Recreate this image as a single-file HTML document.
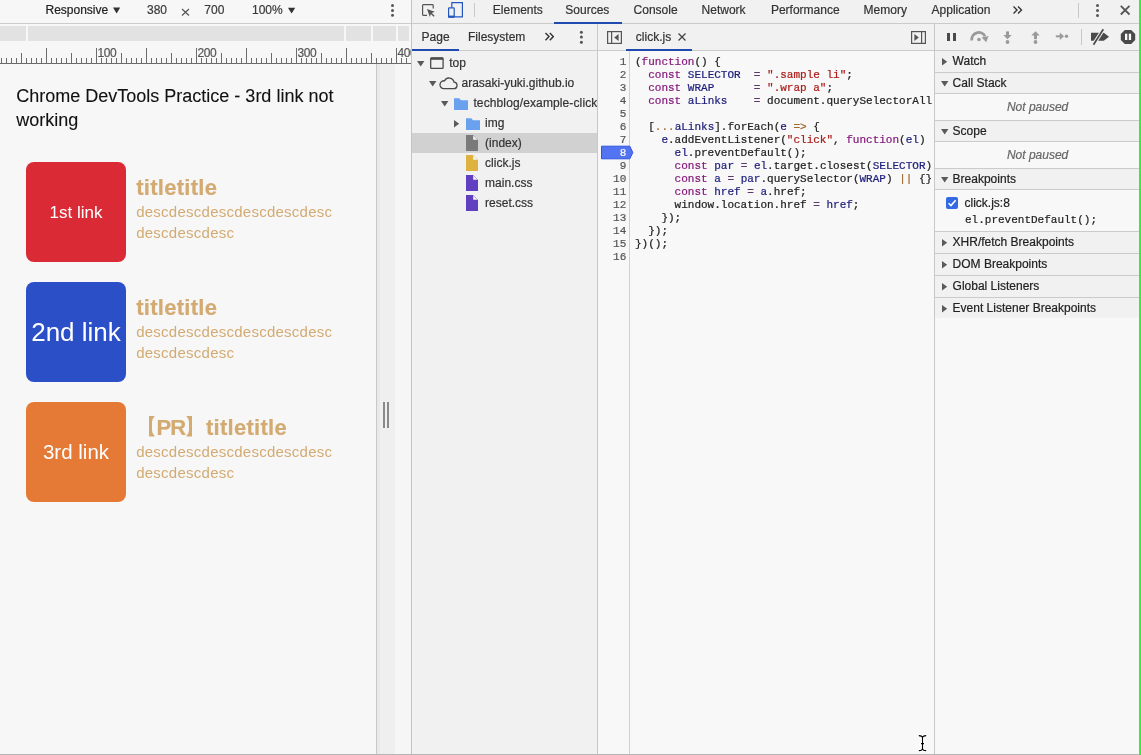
<!DOCTYPE html>
<html><head><meta charset="utf-8"><style>
html,body{margin:0;padding:0;}
body{width:1141px;height:755px;position:relative;overflow:hidden;background:#f7f7f7;font-family:"Liberation Sans", sans-serif;}
div{-webkit-text-stroke:0.2px currentColor;}
</style></head><body><div style="position:absolute;left:0;top:0;width:1141px;height:755px;will-change:transform">
<div style="position:absolute;left:0px;top:0px;width:411px;height:755px;background:#f7f7f7;"></div>
<div style="position:absolute;left:0px;top:0px;width:411px;height:23px;background:#f7f7f7;"></div>
<div style="position:absolute;left:0px;top:23px;width:411px;height:1px;background:#cbcbcb;"></div>
<div style="position:absolute;left:45.5px;top:-5px;line-height:30px;font-size:12px;color:#222;font-weight:normal;font-style:normal;font-family:'Liberation Sans', sans-serif;white-space:pre;">Responsive</div>
<svg style="position:absolute;left:113px;top:7px" width="8" height="7" viewBox="0 0 8 7"><path d="M0 0.5 H7.2 L3.6 6.6 Z" fill="#333"/></svg>
<div style="position:absolute;left:147px;top:-5px;line-height:30px;font-size:12px;color:#3a3a3a;font-weight:normal;font-style:normal;font-family:'Liberation Sans', sans-serif;white-space:pre;">380</div>
<svg style="position:absolute;left:181px;top:8px" width="9" height="8" viewBox="0 0 9 8"><path d="M1 1 L8 7.5 M8 1 L1 7.5" stroke="#555" stroke-width="1.2"/></svg>
<div style="position:absolute;left:204.3px;top:-5px;line-height:30px;font-size:12px;color:#3a3a3a;font-weight:normal;font-style:normal;font-family:'Liberation Sans', sans-serif;white-space:pre;">700</div>
<div style="position:absolute;left:252px;top:-5px;line-height:30px;font-size:12px;color:#3a3a3a;font-weight:normal;font-style:normal;font-family:'Liberation Sans', sans-serif;white-space:pre;">100%</div>
<svg style="position:absolute;left:288px;top:7px" width="8" height="7" viewBox="0 0 8 7"><path d="M0 0.7 H7.2 L3.6 6.6 Z" fill="#333"/></svg>
<svg style="position:absolute;left:390px;top:3px" width="5" height="15" viewBox="0 0 5 15"><circle cx="2.5" cy="2.5" r="1.5" fill="#555"/><circle cx="2.5" cy="7.4" r="1.5" fill="#555"/><circle cx="2.5" cy="12.3" r="1.5" fill="#555"/></svg>
<div style="position:absolute;left:0px;top:26px;width:409px;height:15px;background:#e2e2e2;"></div>
<div style="position:absolute;left:26px;top:26px;width:2px;height:15px;background:#f7f7f7;"></div>
<div style="position:absolute;left:344px;top:26px;width:2px;height:15px;background:#f7f7f7;"></div>
<div style="position:absolute;left:371px;top:26px;width:2px;height:15px;background:#f7f7f7;"></div>
<div style="position:absolute;left:396px;top:26px;width:2px;height:15px;background:#f7f7f7;"></div>
<svg style="position:absolute;left:0px;top:0px" width="411" height="64" viewBox="0 0 411 64"><rect x="1" y="58" width="1" height="5" fill="#6b6b6b"/><rect x="6" y="58" width="1" height="5" fill="#6b6b6b"/><rect x="11" y="58" width="1" height="5" fill="#6b6b6b"/><rect x="16" y="58" width="1" height="5" fill="#6b6b6b"/><rect x="21" y="53" width="1" height="10" fill="#6b6b6b"/><rect x="26" y="58" width="1" height="5" fill="#6b6b6b"/><rect x="31" y="58" width="1" height="5" fill="#6b6b6b"/><rect x="36" y="58" width="1" height="5" fill="#6b6b6b"/><rect x="41" y="58" width="1" height="5" fill="#6b6b6b"/><rect x="46" y="48" width="1" height="15" fill="#6b6b6b"/><rect x="51" y="58" width="1" height="5" fill="#6b6b6b"/><rect x="56" y="58" width="1" height="5" fill="#6b6b6b"/><rect x="61" y="58" width="1" height="5" fill="#6b6b6b"/><rect x="66" y="58" width="1" height="5" fill="#6b6b6b"/><rect x="71" y="53" width="1" height="10" fill="#6b6b6b"/><rect x="76" y="58" width="1" height="5" fill="#6b6b6b"/><rect x="81" y="58" width="1" height="5" fill="#6b6b6b"/><rect x="86" y="58" width="1" height="5" fill="#6b6b6b"/><rect x="91" y="58" width="1" height="5" fill="#6b6b6b"/><rect x="96" y="48" width="1" height="15" fill="#6b6b6b"/><rect x="101" y="58" width="1" height="5" fill="#6b6b6b"/><rect x="106" y="58" width="1" height="5" fill="#6b6b6b"/><rect x="111" y="58" width="1" height="5" fill="#6b6b6b"/><rect x="116" y="58" width="1" height="5" fill="#6b6b6b"/><rect x="121" y="53" width="1" height="10" fill="#6b6b6b"/><rect x="126" y="58" width="1" height="5" fill="#6b6b6b"/><rect x="131" y="58" width="1" height="5" fill="#6b6b6b"/><rect x="136" y="58" width="1" height="5" fill="#6b6b6b"/><rect x="141" y="58" width="1" height="5" fill="#6b6b6b"/><rect x="146" y="48" width="1" height="15" fill="#6b6b6b"/><rect x="151" y="58" width="1" height="5" fill="#6b6b6b"/><rect x="156" y="58" width="1" height="5" fill="#6b6b6b"/><rect x="161" y="58" width="1" height="5" fill="#6b6b6b"/><rect x="166" y="58" width="1" height="5" fill="#6b6b6b"/><rect x="171" y="53" width="1" height="10" fill="#6b6b6b"/><rect x="176" y="58" width="1" height="5" fill="#6b6b6b"/><rect x="181" y="58" width="1" height="5" fill="#6b6b6b"/><rect x="186" y="58" width="1" height="5" fill="#6b6b6b"/><rect x="191" y="58" width="1" height="5" fill="#6b6b6b"/><rect x="196" y="48" width="1" height="15" fill="#6b6b6b"/><rect x="201" y="58" width="1" height="5" fill="#6b6b6b"/><rect x="206" y="58" width="1" height="5" fill="#6b6b6b"/><rect x="211" y="58" width="1" height="5" fill="#6b6b6b"/><rect x="216" y="58" width="1" height="5" fill="#6b6b6b"/><rect x="221" y="53" width="1" height="10" fill="#6b6b6b"/><rect x="226" y="58" width="1" height="5" fill="#6b6b6b"/><rect x="231" y="58" width="1" height="5" fill="#6b6b6b"/><rect x="236" y="58" width="1" height="5" fill="#6b6b6b"/><rect x="241" y="58" width="1" height="5" fill="#6b6b6b"/><rect x="246" y="48" width="1" height="15" fill="#6b6b6b"/><rect x="251" y="58" width="1" height="5" fill="#6b6b6b"/><rect x="256" y="58" width="1" height="5" fill="#6b6b6b"/><rect x="261" y="58" width="1" height="5" fill="#6b6b6b"/><rect x="266" y="58" width="1" height="5" fill="#6b6b6b"/><rect x="271" y="53" width="1" height="10" fill="#6b6b6b"/><rect x="276" y="58" width="1" height="5" fill="#6b6b6b"/><rect x="281" y="58" width="1" height="5" fill="#6b6b6b"/><rect x="286" y="58" width="1" height="5" fill="#6b6b6b"/><rect x="291" y="58" width="1" height="5" fill="#6b6b6b"/><rect x="296" y="48" width="1" height="15" fill="#6b6b6b"/><rect x="301" y="58" width="1" height="5" fill="#6b6b6b"/><rect x="306" y="58" width="1" height="5" fill="#6b6b6b"/><rect x="311" y="58" width="1" height="5" fill="#6b6b6b"/><rect x="316" y="58" width="1" height="5" fill="#6b6b6b"/><rect x="321" y="53" width="1" height="10" fill="#6b6b6b"/><rect x="326" y="58" width="1" height="5" fill="#6b6b6b"/><rect x="331" y="58" width="1" height="5" fill="#6b6b6b"/><rect x="336" y="58" width="1" height="5" fill="#6b6b6b"/><rect x="341" y="58" width="1" height="5" fill="#6b6b6b"/><rect x="346" y="48" width="1" height="15" fill="#6b6b6b"/><rect x="351" y="58" width="1" height="5" fill="#6b6b6b"/><rect x="356" y="58" width="1" height="5" fill="#6b6b6b"/><rect x="361" y="58" width="1" height="5" fill="#6b6b6b"/><rect x="366" y="58" width="1" height="5" fill="#6b6b6b"/><rect x="371" y="53" width="1" height="10" fill="#6b6b6b"/><rect x="376" y="58" width="1" height="5" fill="#6b6b6b"/><rect x="381" y="58" width="1" height="5" fill="#6b6b6b"/><rect x="386" y="58" width="1" height="5" fill="#6b6b6b"/><rect x="391" y="58" width="1" height="5" fill="#6b6b6b"/><rect x="396" y="48" width="1" height="15" fill="#6b6b6b"/><rect x="401" y="58" width="1" height="5" fill="#6b6b6b"/><rect x="406" y="58" width="1" height="5" fill="#6b6b6b"/><rect x="411" y="58" width="1" height="5" fill="#6b6b6b"/><rect x="0" y="63" width="411" height="1" fill="#6b6b6b"/></svg>
<div style="position:absolute;left:97.5px;top:38px;line-height:30px;font-size:12px;color:#555;font-weight:normal;font-style:normal;font-family:'Liberation Sans', sans-serif;white-space:pre;letter-spacing:-0.45px;">100</div>
<div style="position:absolute;left:197.5px;top:38px;line-height:30px;font-size:12px;color:#555;font-weight:normal;font-style:normal;font-family:'Liberation Sans', sans-serif;white-space:pre;letter-spacing:-0.45px;">200</div>
<div style="position:absolute;left:297.5px;top:38px;line-height:30px;font-size:12px;color:#555;font-weight:normal;font-style:normal;font-family:'Liberation Sans', sans-serif;white-space:pre;letter-spacing:-0.45px;">300</div>
<div style="position:absolute;left:397.5px;top:38px;line-height:30px;font-size:12px;color:#555;font-weight:normal;font-style:normal;font-family:'Liberation Sans', sans-serif;white-space:pre;letter-spacing:-0.45px;">400</div>
<div style="position:absolute;left:16.3px;top:81px;line-height:30px;font-size:18px;color:#111;font-weight:normal;font-style:normal;font-family:'Liberation Sans', sans-serif;white-space:pre;-webkit-text-stroke:0.1px currentColor;">Chrome DevTools Practice - 3rd link not</div>
<div style="position:absolute;left:16.3px;top:105px;line-height:30px;font-size:18px;color:#111;font-weight:normal;font-style:normal;font-family:'Liberation Sans', sans-serif;white-space:pre;-webkit-text-stroke:0.1px currentColor;">working</div>
<div style="position:absolute;left:26px;top:162px;width:100px;height:100px;background:#d92a35;border-radius:8px;"></div>
<div style="position:absolute;left:26px;top:198px;line-height:30px;font-size:17px;color:#fff;font-weight:normal;font-style:normal;font-family:'Liberation Sans', sans-serif;white-space:pre;width:100px;text-align:center;-webkit-text-stroke:0;">1st link</div>
<div style="position:absolute;left:26px;top:282px;width:100px;height:100px;background:#2b4fc6;border-radius:8px;"></div>
<div style="position:absolute;left:26px;top:317px;line-height:30px;font-size:26px;color:#fff;font-weight:normal;font-style:normal;font-family:'Liberation Sans', sans-serif;white-space:pre;width:100px;text-align:center;-webkit-text-stroke:0;">2nd link</div>
<div style="position:absolute;left:26px;top:402px;width:100px;height:100px;background:#e47a36;border-radius:8px;"></div>
<div style="position:absolute;left:26px;top:437px;line-height:30px;font-size:20.5px;color:#fff;font-weight:normal;font-style:normal;font-family:'Liberation Sans', sans-serif;white-space:pre;width:100px;text-align:center;-webkit-text-stroke:0;">3rd link</div>
<div style="position:absolute;left:136.2px;top:173px;line-height:30px;font-size:22px;color:#d3ab72;font-weight:bold;font-style:normal;font-family:'Liberation Sans', sans-serif;white-space:pre;letter-spacing:0.28px;">titletitle</div>
<div style="position:absolute;left:136.2px;top:197px;line-height:30px;font-size:15px;color:#d3ab72;font-weight:normal;font-style:normal;font-family:'Liberation Sans', sans-serif;white-space:pre;letter-spacing:0.25px;-webkit-text-stroke:0;">descdescdescdescdescdesc</div>
<div style="position:absolute;left:136.2px;top:218px;line-height:30px;font-size:15px;color:#d3ab72;font-weight:normal;font-style:normal;font-family:'Liberation Sans', sans-serif;white-space:pre;letter-spacing:0.25px;-webkit-text-stroke:0;">descdescdesc</div>
<div style="position:absolute;left:136.2px;top:293px;line-height:30px;font-size:22px;color:#d3ab72;font-weight:bold;font-style:normal;font-family:'Liberation Sans', sans-serif;white-space:pre;letter-spacing:0.28px;">titletitle</div>
<div style="position:absolute;left:136.2px;top:317px;line-height:30px;font-size:15px;color:#d3ab72;font-weight:normal;font-style:normal;font-family:'Liberation Sans', sans-serif;white-space:pre;letter-spacing:0.25px;-webkit-text-stroke:0;">descdescdescdescdescdesc</div>
<div style="position:absolute;left:136.2px;top:338px;line-height:30px;font-size:15px;color:#d3ab72;font-weight:normal;font-style:normal;font-family:'Liberation Sans', sans-serif;white-space:pre;letter-spacing:0.25px;-webkit-text-stroke:0;">descdescdesc</div>
<svg style="position:absolute;left:148px;top:416px" width="7" height="21" viewBox="0 0 7 21"><path d="M1 0 H6.5 L6.5 0.6 Q4 3 4 6 V14.5 Q4 17.5 6.5 19.8 V20.5 H1 Z" fill="#d3ab72"/></svg>
<div style="position:absolute;left:156.6px;top:413px;line-height:30px;font-size:22px;color:#d3ab72;font-weight:bold;font-style:normal;font-family:'Liberation Sans', sans-serif;white-space:pre;letter-spacing:-1.1px;">PR</div>
<svg style="position:absolute;left:186px;top:416px" width="7" height="21" viewBox="0 0 7 21"><path d="M6 0 H0.5 L0.5 0.6 Q3 3 3 6 V14.5 Q3 17.5 0.5 19.8 V20.5 H6 Z" fill="#d3ab72"/></svg>
<div style="position:absolute;left:206px;top:413px;line-height:30px;font-size:22px;color:#d3ab72;font-weight:bold;font-style:normal;font-family:'Liberation Sans', sans-serif;white-space:pre;letter-spacing:0.28px;">titletitle</div>
<div style="position:absolute;left:136.2px;top:437px;line-height:30px;font-size:15px;color:#d3ab72;font-weight:normal;font-style:normal;font-family:'Liberation Sans', sans-serif;white-space:pre;letter-spacing:0.25px;-webkit-text-stroke:0;">descdescdescdescdescdesc</div>
<div style="position:absolute;left:136.2px;top:458px;line-height:30px;font-size:15px;color:#d3ab72;font-weight:normal;font-style:normal;font-family:'Liberation Sans', sans-serif;white-space:pre;letter-spacing:0.25px;-webkit-text-stroke:0;">descdescdesc</div>
<div style="position:absolute;left:376px;top:64px;width:1px;height:691px;background:#c8c8c8;"></div>
<div style="position:absolute;left:377px;top:64px;width:3px;height:691px;background:#e9e9e9;"></div>
<div style="position:absolute;left:380px;top:64px;width:15px;height:691px;background:#efefef;"></div>
<div style="position:absolute;left:395px;top:64px;width:16px;height:691px;background:#f6f6f6;"></div>
<div style="position:absolute;left:383px;top:402px;width:2px;height:26px;background:#8a8a8a;"></div>
<div style="position:absolute;left:387px;top:402px;width:2px;height:26px;background:#8a8a8a;"></div>
<div style="position:absolute;left:411px;top:0px;width:1px;height:755px;background:#c4c4c4;"></div>
<div style="position:absolute;left:412px;top:0px;width:727px;height:755px;background:#f1f1f1;"></div>
<div style="position:absolute;left:412px;top:23px;width:727px;height:1px;background:#cbcbcb;"></div>
<svg style="position:absolute;left:420px;top:2px" width="18" height="18" viewBox="0 0 18 18"><path d="M7 13.3 H3.4 Q2.6 13.3 2.6 12.5 V3.4 Q2.6 2.6 3.4 2.6 H12.4 Q13.2 2.6 13.2 3.4 V6.6" fill="none" stroke="#555" stroke-width="1.2"/><path d="M7 7 L14.8 9.8 L11.8 11 L14.6 13.8 L13.6 14.8 L10.8 12 L9.8 15 Z" fill="#555"/></svg>
<svg style="position:absolute;left:446px;top:1px" width="18" height="18" viewBox="0 0 18 18"><path d="M5.8 6.4 V1.6 H16.4 V15.9 H8.6" fill="none" stroke="#2456c0" stroke-width="1.2"/><rect x="2.6" y="6.9" width="5.6" height="9.2" rx="0.6" fill="none" stroke="#2456c0" stroke-width="1.2"/><rect x="2" y="14.6" width="6.8" height="2" fill="#2456c0"/></svg>
<div style="position:absolute;left:474px;top:3px;width:1px;height:14px;background:#c8c8c8;"></div>
<div style="position:absolute;left:492.8px;top:-5px;line-height:30px;font-size:12px;color:#333;font-weight:normal;font-style:normal;font-family:'Liberation Sans', sans-serif;white-space:pre;">Elements</div>
<div style="position:absolute;left:565.3px;top:-5px;line-height:30px;font-size:12px;color:#333;font-weight:normal;font-style:normal;font-family:'Liberation Sans', sans-serif;white-space:pre;">Sources</div>
<div style="position:absolute;left:633.6px;top:-5px;line-height:30px;font-size:12px;color:#333;font-weight:normal;font-style:normal;font-family:'Liberation Sans', sans-serif;white-space:pre;">Console</div>
<div style="position:absolute;left:701.6px;top:-5px;line-height:30px;font-size:12px;color:#333;font-weight:normal;font-style:normal;font-family:'Liberation Sans', sans-serif;white-space:pre;">Network</div>
<div style="position:absolute;left:770.9px;top:-5px;line-height:30px;font-size:12px;color:#333;font-weight:normal;font-style:normal;font-family:'Liberation Sans', sans-serif;white-space:pre;">Performance</div>
<div style="position:absolute;left:863.6px;top:-5px;line-height:30px;font-size:12px;color:#333;font-weight:normal;font-style:normal;font-family:'Liberation Sans', sans-serif;white-space:pre;">Memory</div>
<div style="position:absolute;left:931.6px;top:-5px;line-height:30px;font-size:12px;color:#333;font-weight:normal;font-style:normal;font-family:'Liberation Sans', sans-serif;white-space:pre;">Application</div>
<div style="position:absolute;left:554px;top:22px;width:68px;height:2px;background:#1f4bb0;"></div>
<svg style="position:absolute;left:1012px;top:5px" width="12" height="10" viewBox="0 0 12 10"><path d="M1.5 1.5 L5 5 L1.5 8.5 M6 1.5 L9.5 5 L6 8.5" fill="none" stroke="#333" stroke-width="1.4"/></svg>
<div style="position:absolute;left:1078px;top:3px;width:1px;height:15px;background:#c8c8c8;"></div>
<svg style="position:absolute;left:1095px;top:3px" width="5" height="15" viewBox="0 0 5 15"><circle cx="2.5" cy="2.6" r="1.5" fill="#555"/><circle cx="2.5" cy="7.5" r="1.5" fill="#555"/><circle cx="2.5" cy="12.5" r="1.5" fill="#555"/></svg>
<svg style="position:absolute;left:1119px;top:4px" width="12" height="12" viewBox="0 0 12 12"><path d="M1.8 1.8 L10.5 10.5 M10.5 1.8 L1.8 10.5" stroke="#555" stroke-width="1.8"/></svg>
<div style="position:absolute;left:1139px;top:0px;width:2px;height:755px;background:#33f233;"></div>
<div style="position:absolute;left:412px;top:50px;width:185px;height:1px;background:#cbcbcb;"></div>
<div style="position:absolute;left:421.6px;top:22px;line-height:30px;font-size:12px;color:#333;font-weight:normal;font-style:normal;font-family:'Liberation Sans', sans-serif;white-space:pre;">Page</div>
<div style="position:absolute;left:468px;top:22px;line-height:30px;font-size:12px;color:#333;font-weight:normal;font-style:normal;font-family:'Liberation Sans', sans-serif;white-space:pre;">Filesystem</div>
<div style="position:absolute;left:412px;top:49px;width:47px;height:2px;background:#1f4bb0;"></div>
<svg style="position:absolute;left:544px;top:32px" width="10" height="10" viewBox="0 0 10 10"><path d="M1.5 1 L5 4.6 L1.5 8.2 M5.8 1 L9.3 4.6 L5.8 8.2" fill="none" stroke="#333" stroke-width="1.4"/></svg>
<svg style="position:absolute;left:579px;top:29px" width="5" height="16" viewBox="0 0 5 16"><circle cx="2.4" cy="3.2" r="1.5" fill="#555"/><circle cx="2.4" cy="8.1" r="1.5" fill="#555"/><circle cx="2.4" cy="13.3" r="1.5" fill="#555"/></svg>
<div style="position:absolute;left:597px;top:24px;width:1px;height:731px;background:#c8c8c8;"></div>
<div style="position:absolute;left:412px;top:133px;width:185px;height:20px;background:#d1d1d1;"></div>
<svg style="position:absolute;left:416.8px;top:60.7px" width="8" height="6" viewBox="0 0 8 6"><path d="M0 0 H7.4 L3.7 5.4 Z" fill="#5a5a5a"/></svg>
<svg style="position:absolute;left:430px;top:57px" width="14" height="12" viewBox="0 0 14 12"><rect x="0.7" y="0.9" width="12.4" height="10.6" rx="1" fill="none" stroke="#4a4a4a" stroke-width="1.3"/><rect x="0.6" y="0.6" width="12.6" height="2.2" fill="#4a4a4a"/></svg>
<div style="position:absolute;left:449.2px;top:48px;line-height:30px;font-size:12px;color:#333;font-weight:normal;font-style:normal;font-family:'Liberation Sans', sans-serif;white-space:pre;">top</div>
<svg style="position:absolute;left:429px;top:80.8px" width="8" height="6" viewBox="0 0 8 6"><path d="M0 0 H7.4 L3.7 5.4 Z" fill="#5a5a5a"/></svg>
<svg style="position:absolute;left:439px;top:76.5px" width="19" height="13" viewBox="0 0 19 13"><path d="M4.3 11.6 H14.6 A3.2 3.2 0 0 0 15 5.2 A5 5 0 0 0 5.6 3.8 A3.9 3.9 0 0 0 4.3 11.6 Z" fill="none" stroke="#4a4a4a" stroke-width="1.3"/></svg>
<div style="position:absolute;left:461.5px;top:68px;line-height:30px;font-size:12px;color:#333;font-weight:normal;font-style:normal;font-family:'Liberation Sans', sans-serif;white-space:pre;">arasaki-yuki.github.io</div>
<svg style="position:absolute;left:441px;top:100.8px" width="8" height="6" viewBox="0 0 8 6"><path d="M0 0 H7.4 L3.7 5.4 Z" fill="#5a5a5a"/></svg>
<svg style="position:absolute;left:454px;top:98px" width="14" height="12" viewBox="0 0 14 12"><path d="M0 0.3 H5.3 L7 2.3 H14 V11.9 H0 Z" fill="#6aa1ef"/></svg>
<div style="position:absolute;left:473.4px;top:88px;line-height:30px;font-size:12px;color:#333;font-weight:normal;font-style:normal;font-family:'Liberation Sans', sans-serif;white-space:pre;letter-spacing:0.12px;width:123.6px;overflow:hidden;">techblog/example-click</div>
<svg style="position:absolute;left:454px;top:119.6px" width="6" height="8" viewBox="0 0 6 8"><path d="M0 0 V7.4 L5.2 3.7 Z" fill="#5a5a5a"/></svg>
<svg style="position:absolute;left:466px;top:118px" width="14" height="12" viewBox="0 0 14 12"><path d="M0 0.3 H5.3 L7 2.3 H14 V11.9 H0 Z" fill="#6aa1ef"/></svg>
<div style="position:absolute;left:485.1px;top:108px;line-height:30px;font-size:12px;color:#333;font-weight:normal;font-style:normal;font-family:'Liberation Sans', sans-serif;white-space:pre;">img</div>
<svg style="position:absolute;left:466px;top:135px" width="12" height="16" viewBox="0 0 12 16"><path d="M0 0 H7 L12 5 V16 H0 Z" fill="#7a7a7a"/><path d="M7.2 0.4 V4.8 H11.6 Z" fill="#f4f4f4"/></svg>
<div style="position:absolute;left:485.1px;top:128px;line-height:30px;font-size:12px;color:#333;font-weight:normal;font-style:normal;font-family:'Liberation Sans', sans-serif;white-space:pre;">(index)</div>
<svg style="position:absolute;left:466px;top:155px" width="12" height="16" viewBox="0 0 12 16"><path d="M0 0 H7 L12 5 V16 H0 Z" fill="#ddb23f"/><path d="M7.2 0.4 V4.8 H11.6 Z" fill="#f4f4f4"/></svg>
<div style="position:absolute;left:485.1px;top:148px;line-height:30px;font-size:12px;color:#333;font-weight:normal;font-style:normal;font-family:'Liberation Sans', sans-serif;white-space:pre;">click.js</div>
<svg style="position:absolute;left:466px;top:175px" width="12" height="16" viewBox="0 0 12 16"><path d="M0 0 H7 L12 5 V16 H0 Z" fill="#6040c0"/><path d="M7.2 0.4 V4.8 H11.6 Z" fill="#f4f4f4"/></svg>
<div style="position:absolute;left:485.1px;top:168px;line-height:30px;font-size:12px;color:#333;font-weight:normal;font-style:normal;font-family:'Liberation Sans', sans-serif;white-space:pre;">main.css</div>
<svg style="position:absolute;left:466px;top:195px" width="12" height="16" viewBox="0 0 12 16"><path d="M0 0 H7 L12 5 V16 H0 Z" fill="#6040c0"/><path d="M7.2 0.4 V4.8 H11.6 Z" fill="#f4f4f4"/></svg>
<div style="position:absolute;left:485.1px;top:188px;line-height:30px;font-size:12px;color:#333;font-weight:normal;font-style:normal;font-family:'Liberation Sans', sans-serif;white-space:pre;">reset.css</div>
<div style="position:absolute;left:598px;top:51px;width:336px;height:704px;background:#f8f8f8;"></div>
<div style="position:absolute;left:598px;top:50px;width:336px;height:1px;background:#cbcbcb;"></div>
<svg style="position:absolute;left:606px;top:30px" width="17" height="15" viewBox="0 0 17 15"><rect x="1.6" y="1.6" width="13.8" height="11.8" fill="none" stroke="#555" stroke-width="1.2"/><rect x="5" y="1.6" width="1.2" height="11.8" fill="#555"/><path d="M12.6 3.9 V11.1 L8.2 7.5 Z" fill="#555"/></svg>
<div style="position:absolute;left:635.8px;top:22px;line-height:30px;font-size:12px;color:#333;font-weight:normal;font-style:normal;font-family:'Liberation Sans', sans-serif;white-space:pre;">click.js</div>
<svg style="position:absolute;left:677px;top:32px" width="10" height="10" viewBox="0 0 10 10"><path d="M1.5 1.5 L8.5 8.5 M8.5 1.5 L1.5 8.5" stroke="#444" stroke-width="1.3"/></svg>
<div style="position:absolute;left:626px;top:49px;width:66px;height:2px;background:#1f4bb0;"></div>
<svg style="position:absolute;left:910px;top:30px" width="17" height="15" viewBox="0 0 17 15"><rect x="1.6" y="1.6" width="13.8" height="11.8" fill="none" stroke="#555" stroke-width="1.2"/><rect x="11" y="1.6" width="1.2" height="11.8" fill="#555"/><path d="M4.4 3.9 V11.1 L8.8 7.5 Z" fill="#555"/></svg>
<div style="position:absolute;left:934px;top:24px;width:1px;height:731px;background:#c8c8c8;"></div>
<div style="position:absolute;left:629px;top:51px;width:1px;height:704px;background:#d0d0d0;"></div>
<svg style="position:absolute;left:600px;top:145px" width="35" height="15" viewBox="0 0 35 15"><path d="M1.5 1.2 H29.8 L32.8 7.5 L29.8 13.8 H1.5 Z" fill="#5274f2" stroke="#2e55e0" stroke-width="1"/></svg>
<div style="position:absolute;left:630px;top:51px;width:303px;height:704px;overflow:hidden">
<div style="position:absolute;left:5px;top:4.97px;line-height:13px;font-size:11px;font-family:'Liberation Mono', monospace;color:#222;white-space:pre;-webkit-text-stroke:0.22px currentColor">(<span style="color:#861a7c">function</span>() {</div>
<div style="position:absolute;left:5px;top:17.97px;line-height:13px;font-size:11px;font-family:'Liberation Mono', monospace;color:#222;white-space:pre;-webkit-text-stroke:0.22px currentColor">  <span style="color:#861a7c">const</span> <span style="color:#1e1e7c">SELECTOR</span>  <span style="color:#5c3a6c">=</span> <span style="color:#ab1c1a">&quot;.sample li&quot;</span>;</div>
<div style="position:absolute;left:5px;top:30.97px;line-height:13px;font-size:11px;font-family:'Liberation Mono', monospace;color:#222;white-space:pre;-webkit-text-stroke:0.22px currentColor">  <span style="color:#861a7c">const</span> <span style="color:#1e1e7c">WRAP</span>      <span style="color:#5c3a6c">=</span> <span style="color:#ab1c1a">&quot;.wrap a&quot;</span>;</div>
<div style="position:absolute;left:5px;top:43.97px;line-height:13px;font-size:11px;font-family:'Liberation Mono', monospace;color:#222;white-space:pre;-webkit-text-stroke:0.22px currentColor">  <span style="color:#861a7c">const</span> <span style="color:#1e1e7c">aLinks</span>    <span style="color:#5c3a6c">=</span> document.querySelectorAll(&quot;.sample a&quot;);</div>
<div style="position:absolute;left:5px;top:56.97px;line-height:13px;font-size:11px;font-family:'Liberation Mono', monospace;color:#222;white-space:pre;-webkit-text-stroke:0.22px currentColor"></div>
<div style="position:absolute;left:5px;top:69.97px;line-height:13px;font-size:11px;font-family:'Liberation Mono', monospace;color:#222;white-space:pre;-webkit-text-stroke:0.22px currentColor">  [<span style="color:#a0682a">...</span><span style="color:#1e1e7c">aLinks</span>].forEach(<span style="color:#1e1e7c">e</span> <span style="color:#a0682a">=&gt;</span> {</div>
<div style="position:absolute;left:5px;top:82.97px;line-height:13px;font-size:11px;font-family:'Liberation Mono', monospace;color:#222;white-space:pre;-webkit-text-stroke:0.22px currentColor">    <span style="color:#1e1e7c">e</span>.addEventListener(<span style="color:#ab1c1a">&quot;click&quot;</span>, <span style="color:#861a7c">function</span>(<span style="color:#1e1e7c">el</span>) {</div>
<div style="position:absolute;left:5px;top:95.97px;line-height:13px;font-size:11px;font-family:'Liberation Mono', monospace;color:#222;white-space:pre;-webkit-text-stroke:0.22px currentColor">      <span style="color:#1e1e7c">el</span>.preventDefault();</div>
<div style="position:absolute;left:5px;top:108.97px;line-height:13px;font-size:11px;font-family:'Liberation Mono', monospace;color:#222;white-space:pre;-webkit-text-stroke:0.22px currentColor">      <span style="color:#861a7c">const</span> <span style="color:#1e1e7c">par</span> <span style="color:#5c3a6c">=</span> <span style="color:#1e1e7c">el</span>.target.closest(<span style="color:#1e1e7c">SELECTOR</span>);</div>
<div style="position:absolute;left:5px;top:121.97px;line-height:13px;font-size:11px;font-family:'Liberation Mono', monospace;color:#222;white-space:pre;-webkit-text-stroke:0.22px currentColor">      <span style="color:#861a7c">const</span> <span style="color:#1e1e7c">a</span> <span style="color:#5c3a6c">=</span> <span style="color:#1e1e7c">par</span>.querySelector(<span style="color:#1e1e7c">WRAP</span>) <span style="color:#a0682a">||</span> {};</div>
<div style="position:absolute;left:5px;top:134.97px;line-height:13px;font-size:11px;font-family:'Liberation Mono', monospace;color:#222;white-space:pre;-webkit-text-stroke:0.22px currentColor">      <span style="color:#861a7c">const</span> <span style="color:#1e1e7c">href</span> <span style="color:#5c3a6c">=</span> <span style="color:#1e1e7c">a</span>.href;</div>
<div style="position:absolute;left:5px;top:147.97px;line-height:13px;font-size:11px;font-family:'Liberation Mono', monospace;color:#222;white-space:pre;-webkit-text-stroke:0.22px currentColor">      window.location.href <span style="color:#5c3a6c">=</span> <span style="color:#1e1e7c">href</span>;</div>
<div style="position:absolute;left:5px;top:160.97px;line-height:13px;font-size:11px;font-family:'Liberation Mono', monospace;color:#222;white-space:pre;-webkit-text-stroke:0.22px currentColor">    });</div>
<div style="position:absolute;left:5px;top:173.97px;line-height:13px;font-size:11px;font-family:'Liberation Mono', monospace;color:#222;white-space:pre;-webkit-text-stroke:0.22px currentColor">  });</div>
<div style="position:absolute;left:5px;top:186.97px;line-height:13px;font-size:11px;font-family:'Liberation Mono', monospace;color:#222;white-space:pre;-webkit-text-stroke:0.22px currentColor">})();</div>
<div style="position:absolute;left:5px;top:199.97px;line-height:13px;font-size:11px;font-family:'Liberation Mono', monospace;color:#222;white-space:pre;-webkit-text-stroke:0.22px currentColor"></div>
</div>
<div style="position:absolute;left:600px;width:26.3px;text-align:right;top:55.97px;line-height:13px;font-size:11px;font-family:'Liberation Mono', monospace;color:#555;white-space:pre">1</div>
<div style="position:absolute;left:600px;width:26.3px;text-align:right;top:68.97px;line-height:13px;font-size:11px;font-family:'Liberation Mono', monospace;color:#555;white-space:pre">2</div>
<div style="position:absolute;left:600px;width:26.3px;text-align:right;top:81.97px;line-height:13px;font-size:11px;font-family:'Liberation Mono', monospace;color:#555;white-space:pre">3</div>
<div style="position:absolute;left:600px;width:26.3px;text-align:right;top:94.97px;line-height:13px;font-size:11px;font-family:'Liberation Mono', monospace;color:#555;white-space:pre">4</div>
<div style="position:absolute;left:600px;width:26.3px;text-align:right;top:107.97px;line-height:13px;font-size:11px;font-family:'Liberation Mono', monospace;color:#555;white-space:pre">5</div>
<div style="position:absolute;left:600px;width:26.3px;text-align:right;top:120.97px;line-height:13px;font-size:11px;font-family:'Liberation Mono', monospace;color:#555;white-space:pre">6</div>
<div style="position:absolute;left:600px;width:26.3px;text-align:right;top:133.97px;line-height:13px;font-size:11px;font-family:'Liberation Mono', monospace;color:#555;white-space:pre">7</div>
<div style="position:absolute;left:600px;width:26.3px;text-align:right;top:146.97px;line-height:13px;font-size:11px;font-family:'Liberation Mono', monospace;color:#fff;white-space:pre">8</div>
<div style="position:absolute;left:600px;width:26.3px;text-align:right;top:159.97px;line-height:13px;font-size:11px;font-family:'Liberation Mono', monospace;color:#555;white-space:pre">9</div>
<div style="position:absolute;left:600px;width:26.3px;text-align:right;top:172.97px;line-height:13px;font-size:11px;font-family:'Liberation Mono', monospace;color:#555;white-space:pre">10</div>
<div style="position:absolute;left:600px;width:26.3px;text-align:right;top:185.97px;line-height:13px;font-size:11px;font-family:'Liberation Mono', monospace;color:#555;white-space:pre">11</div>
<div style="position:absolute;left:600px;width:26.3px;text-align:right;top:198.97px;line-height:13px;font-size:11px;font-family:'Liberation Mono', monospace;color:#555;white-space:pre">12</div>
<div style="position:absolute;left:600px;width:26.3px;text-align:right;top:211.97px;line-height:13px;font-size:11px;font-family:'Liberation Mono', monospace;color:#555;white-space:pre">13</div>
<div style="position:absolute;left:600px;width:26.3px;text-align:right;top:224.97px;line-height:13px;font-size:11px;font-family:'Liberation Mono', monospace;color:#555;white-space:pre">14</div>
<div style="position:absolute;left:600px;width:26.3px;text-align:right;top:237.97px;line-height:13px;font-size:11px;font-family:'Liberation Mono', monospace;color:#555;white-space:pre">15</div>
<div style="position:absolute;left:600px;width:26.3px;text-align:right;top:250.97px;line-height:13px;font-size:11px;font-family:'Liberation Mono', monospace;color:#555;white-space:pre">16</div>
<div style="position:absolute;left:935px;top:50px;width:204px;height:1px;background:#cbcbcb;"></div>
<div style="position:absolute;left:947px;top:33px;width:3px;height:8px;background:#4a4a4a;"></div>
<div style="position:absolute;left:953px;top:33px;width:3px;height:8px;background:#4a4a4a;"></div>
<svg style="position:absolute;left:969px;top:30px" width="22" height="14" viewBox="0 0 22 14"><path d="M2.8 10.5 A7 7 0 0 1 16 6.4" fill="none" stroke="#9a9a9a" stroke-width="2.8"/><path d="M12.6 7.6 L19.6 6 L17.2 12.2 Z" fill="#9a9a9a"/><circle cx="10" cy="9.5" r="1.8" fill="#9a9a9a"/></svg>
<svg style="position:absolute;left:1002px;top:30px" width="11" height="15" viewBox="0 0 11 15"><rect x="4" y="1.4" width="3" height="4.6" fill="#9a9a9a"/><path d="M1.3 5 H9.7 L5.5 9.2 Z" fill="#9a9a9a"/><circle cx="5.5" cy="12" r="1.9" fill="#9a9a9a"/></svg>
<svg style="position:absolute;left:1030px;top:30px" width="11" height="15" viewBox="0 0 11 15"><rect x="4" y="5" width="3" height="4.2" fill="#9a9a9a"/><path d="M1.3 5.6 H9.7 L5.5 1.3 Z" fill="#9a9a9a"/><circle cx="5.5" cy="12" r="1.9" fill="#9a9a9a"/></svg>
<svg style="position:absolute;left:1054px;top:31px" width="16" height="11" viewBox="0 0 16 11"><rect x="1.8" y="4.3" width="5" height="2" fill="#9a9a9a"/><path d="M5.8 1.6 L10 5.3 L5.8 9 Z" fill="#9a9a9a"/><circle cx="12.5" cy="5.3" r="1.7" fill="#9a9a9a"/></svg>
<div style="position:absolute;left:1081px;top:29px;width:1px;height:16px;background:#c8c8c8;"></div>
<svg style="position:absolute;left:1089px;top:28px" width="22" height="18" viewBox="0 0 22 18"><path d="M2 4.8 H14.8 L20 8.8 L14.8 12.8 H2 Z" fill="#4a4a4a"/><path d="M4.5 16.8 L14.3 1.3" stroke="#f1f1f1" stroke-width="3.8"/><path d="M4.5 16.8 L14.3 1.3" stroke="#4a4a4a" stroke-width="1.7"/></svg>
<svg style="position:absolute;left:1120px;top:29px" width="16" height="16" viewBox="0 0 16 16"><path d="M4.8 1 H11.2 L15.2 5 V11 L11.2 15 H4.8 L0.8 11 V5 Z" fill="#4a4a4a"/><rect x="5" y="4.7" width="2.3" height="6.3" fill="#fff"/><rect x="8.8" y="4.7" width="2.3" height="6.3" fill="#fff"/></svg>
<div style="position:absolute;left:935px;top:51px;width:204px;height:704px;background:#f8f8f8;"></div>
<div style="position:absolute;left:935px;top:50px;width:204px;height:1px;background:#cbcbcb;"></div>
<div style="position:absolute;left:935px;top:51px;width:204px;height:21px;background:#f1f1f1;"></div>
<svg style="position:absolute;left:942px;top:57.9px" width="6" height="8" viewBox="0 0 6 8"><path d="M0 0 V7.4 L5.2 3.7 Z" fill="#5a5a5a"/></svg>
<div style="position:absolute;left:952.6px;top:46px;line-height:30px;font-size:12px;color:#222;font-weight:normal;font-style:normal;font-family:'Liberation Sans', sans-serif;white-space:pre;">Watch</div>
<div style="position:absolute;left:935px;top:72px;width:204px;height:1px;background:#cbcbcb;"></div>
<div style="position:absolute;left:935px;top:73px;width:204px;height:20px;background:#f1f1f1;"></div>
<svg style="position:absolute;left:940.9px;top:81.4px" width="8" height="6" viewBox="0 0 8 6"><path d="M0 0 H7.4 L3.7 5.4 Z" fill="#5a5a5a"/></svg>
<div style="position:absolute;left:952.6px;top:68px;line-height:30px;font-size:12px;color:#222;font-weight:normal;font-style:normal;font-family:'Liberation Sans', sans-serif;white-space:pre;">Call Stack</div>
<div style="position:absolute;left:935px;top:93px;width:204px;height:1px;background:#cbcbcb;"></div>
<div style="position:absolute;left:1006.9px;top:92px;line-height:30px;font-size:12px;color:#666;font-weight:normal;font-style:italic;font-family:'Liberation Sans', sans-serif;white-space:pre;">Not paused</div>
<div style="position:absolute;left:935px;top:120px;width:204px;height:1px;background:#cbcbcb;"></div>
<div style="position:absolute;left:935px;top:121px;width:204px;height:20px;background:#f1f1f1;"></div>
<svg style="position:absolute;left:940.9px;top:129.4px" width="8" height="6" viewBox="0 0 8 6"><path d="M0 0 H7.4 L3.7 5.4 Z" fill="#5a5a5a"/></svg>
<div style="position:absolute;left:952.6px;top:116px;line-height:30px;font-size:12px;color:#222;font-weight:normal;font-style:normal;font-family:'Liberation Sans', sans-serif;white-space:pre;">Scope</div>
<div style="position:absolute;left:935px;top:141px;width:204px;height:1px;background:#cbcbcb;"></div>
<div style="position:absolute;left:1006.9px;top:140px;line-height:30px;font-size:12px;color:#666;font-weight:normal;font-style:italic;font-family:'Liberation Sans', sans-serif;white-space:pre;">Not paused</div>
<div style="position:absolute;left:935px;top:168px;width:204px;height:1px;background:#cbcbcb;"></div>
<div style="position:absolute;left:935px;top:169px;width:204px;height:20px;background:#f1f1f1;"></div>
<svg style="position:absolute;left:940.9px;top:177.4px" width="8" height="6" viewBox="0 0 8 6"><path d="M0 0 H7.4 L3.7 5.4 Z" fill="#5a5a5a"/></svg>
<div style="position:absolute;left:952.6px;top:164px;line-height:30px;font-size:12px;color:#222;font-weight:normal;font-style:normal;font-family:'Liberation Sans', sans-serif;white-space:pre;">Breakpoints</div>
<div style="position:absolute;left:935px;top:189px;width:204px;height:1px;background:#cbcbcb;"></div>
<svg style="position:absolute;left:945px;top:196px" width="14" height="14" viewBox="0 0 14 14"><rect x="1" y="1" width="12" height="12" rx="2" fill="#3469e4"/><path d="M3.6 7.2 L6 9.6 L10.6 4.2" fill="none" stroke="#fff" stroke-width="1.6"/></svg>
<div style="position:absolute;left:964.5px;top:188px;line-height:30px;font-size:12px;color:#222;font-weight:normal;font-style:normal;font-family:'Liberation Sans', sans-serif;white-space:pre;">click.js:8</div>
<div style="position:absolute;left:965px;top:213.57px;line-height:13px;font-size:11px;font-family:'Liberation Mono', monospace;color:#222;white-space:pre">el.preventDefault();</div>
<div style="position:absolute;left:935px;top:231px;width:204px;height:1px;background:#cbcbcb;"></div>
<div style="position:absolute;left:935px;top:232px;width:204px;height:21px;background:#f1f1f1;"></div>
<svg style="position:absolute;left:942px;top:238.9px" width="6" height="8" viewBox="0 0 6 8"><path d="M0 0 V7.4 L5.2 3.7 Z" fill="#5a5a5a"/></svg>
<div style="position:absolute;left:952.6px;top:227px;line-height:30px;font-size:12px;color:#222;font-weight:normal;font-style:normal;font-family:'Liberation Sans', sans-serif;white-space:pre;">XHR/fetch Breakpoints</div>
<div style="position:absolute;left:935px;top:253px;width:204px;height:1px;background:#cbcbcb;"></div>
<div style="position:absolute;left:935px;top:254px;width:204px;height:21px;background:#f1f1f1;"></div>
<svg style="position:absolute;left:942px;top:260.9px" width="6" height="8" viewBox="0 0 6 8"><path d="M0 0 V7.4 L5.2 3.7 Z" fill="#5a5a5a"/></svg>
<div style="position:absolute;left:952.6px;top:249px;line-height:30px;font-size:12px;color:#222;font-weight:normal;font-style:normal;font-family:'Liberation Sans', sans-serif;white-space:pre;">DOM Breakpoints</div>
<div style="position:absolute;left:935px;top:275px;width:204px;height:1px;background:#cbcbcb;"></div>
<div style="position:absolute;left:935px;top:276px;width:204px;height:21px;background:#f1f1f1;"></div>
<svg style="position:absolute;left:942px;top:282.9px" width="6" height="8" viewBox="0 0 6 8"><path d="M0 0 V7.4 L5.2 3.7 Z" fill="#5a5a5a"/></svg>
<div style="position:absolute;left:952.6px;top:271px;line-height:30px;font-size:12px;color:#222;font-weight:normal;font-style:normal;font-family:'Liberation Sans', sans-serif;white-space:pre;">Global Listeners</div>
<div style="position:absolute;left:935px;top:297px;width:204px;height:1px;background:#cbcbcb;"></div>
<div style="position:absolute;left:935px;top:298px;width:204px;height:20px;background:#f1f1f1;"></div>
<svg style="position:absolute;left:942px;top:304.9px" width="6" height="8" viewBox="0 0 6 8"><path d="M0 0 V7.4 L5.2 3.7 Z" fill="#5a5a5a"/></svg>
<div style="position:absolute;left:952.6px;top:293px;line-height:30px;font-size:12px;color:#222;font-weight:normal;font-style:normal;font-family:'Liberation Sans', sans-serif;white-space:pre;">Event Listener Breakpoints</div>
<div style="position:absolute;left:0px;top:754px;width:1139px;height:1px;background:#b5b5b5;"></div>
<svg style="position:absolute;left:0px;top:0px" width="1141" height="755" viewBox="0 0 1141 755"><path d="M918.8 735.6 Q922.5 735.6 922.5 738 Q922.5 735.6 926.2 735.6 M922.5 738 V748.2 M918.8 750.6 Q922.5 750.6 922.5 748.2 Q922.5 750.6 926.2 750.6 M921 743.6 H924" fill="none" stroke="#fff" stroke-width="3" stroke-linecap="round"/><path d="M918.8 735.6 Q922.5 735.6 922.5 738 Q922.5 735.6 926.2 735.6 M922.5 738 V748.2 M918.8 750.6 Q922.5 750.6 922.5 748.2 Q922.5 750.6 926.2 750.6 M921 743.6 H924" fill="none" stroke="#000" stroke-width="1.1"/></svg>
</div></body></html>
